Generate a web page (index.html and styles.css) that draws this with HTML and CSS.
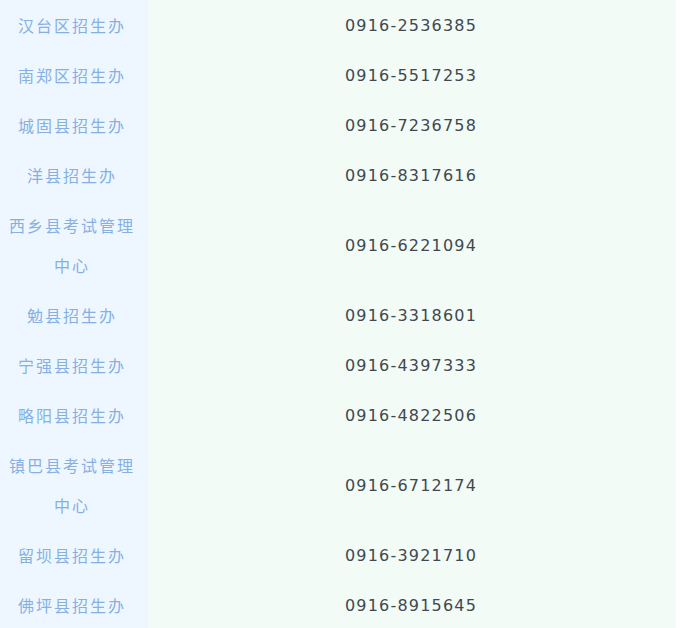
FILE: index.html
```html
<!DOCTYPE html>
<html lang="zh-CN">
<head>
<meta charset="utf-8">
<title>招生办联系电话</title>
<link rel="stylesheet" href="styles.css">
</head>
<body>
<table class="contacts">
<tbody>
<tr><td class="name">汉台区招生办</td><td class="phone">0916-2536385</td></tr>
<tr><td class="name">南郑区招生办</td><td class="phone">0916-5517253</td></tr>
<tr><td class="name">城固县招生办</td><td class="phone">0916-7236758</td></tr>
<tr><td class="name">洋县招生办</td><td class="phone">0916-8317616</td></tr>
<tr><td class="name">西乡县考试管理中心</td><td class="phone">0916-6221094</td></tr>
<tr><td class="name">勉县招生办</td><td class="phone">0916-3318601</td></tr>
<tr><td class="name">宁强县招生办</td><td class="phone">0916-4397333</td></tr>
<tr><td class="name">略阳县招生办</td><td class="phone">0916-4822506</td></tr>
<tr><td class="name">镇巴县考试管理中心</td><td class="phone">0916-6712174</td></tr>
<tr><td class="name">留坝县招生办</td><td class="phone">0916-3921710</td></tr>
<tr><td class="name">佛坪县招生办</td><td class="phone">0916-8915645</td></tr>
</tbody>
</table>
</body>
</html>
```
FILE: styles.css
```css
html, body {
  margin: 0;
  padding: 0;
  background: #ffffff;
}
.contacts {
  width: 676px;
  border-collapse: collapse;
  border-spacing: 0;
}
.contacts td {
  padding: 5px 10px;
  line-height: 40px;
  text-align: center;
  vertical-align: middle;
}
.contacts .name {
  width: 128px;
  padding: 5px 12px 5px 8px;
  background: #eef7ff;
  color: #86b0e4;
  font-family: "Noto Sans CJK SC", "Liberation Sans", sans-serif;
  font-size: 16px;
  letter-spacing: 2px;
}
.contacts .phone {
  padding: 6px 12px 4px 10px;
  background: #f2fbf6;
  color: #414850;
  font-family: "DejaVu Sans", sans-serif;
  font-size: 16px;
  letter-spacing: 1.2px;
}
```
